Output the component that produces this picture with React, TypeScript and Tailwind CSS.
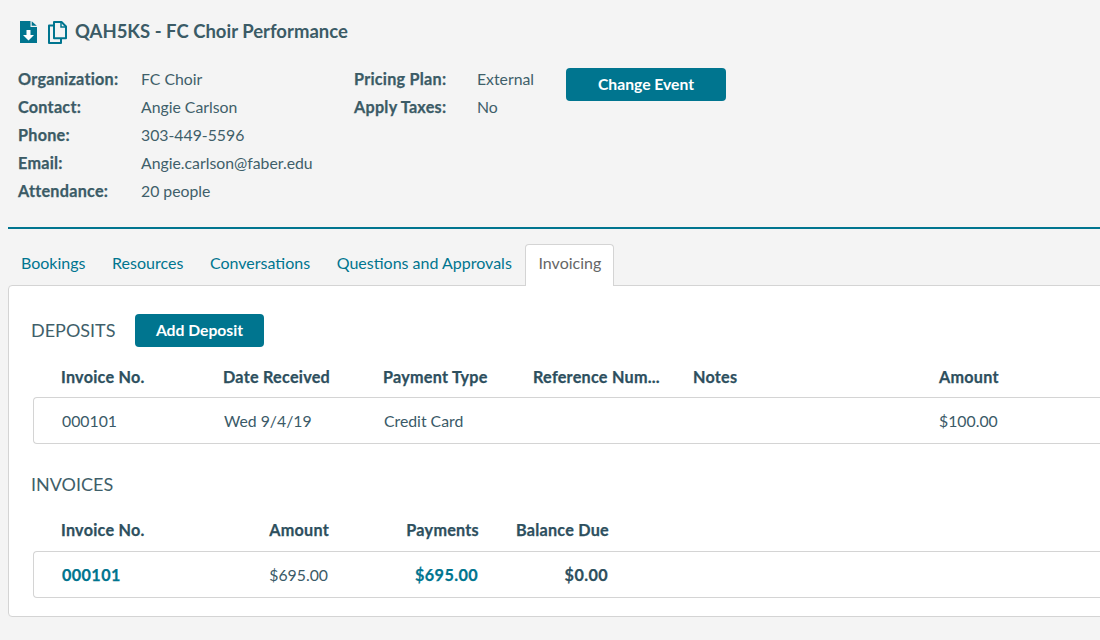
const details = [
  ['Organization:', 'FC Choir'],
  ['Contact:', 'Angie Carlson'],
  ['Phone:', '303-449-5596'],
  ['Email:', 'Angie.carlson@faber.edu'],
  ['Attendance:', '20 people'],
]

const plan = [
  ['Pricing Plan:', 'External'],
  ['Apply Taxes:', 'No'],
]

const tabs = ['Bookings', 'Resources', 'Conversations', 'Questions and Approvals']

function DetailRow({ label, value }: { label: string; value: string }) {
  return (
    <div className="flex h-[28px] items-center">
      <div className="w-[123px] text-[16.200px] font-bold tracking-[0.25px] text-[#3b5b66] [-webkit-text-stroke:0.25px]">{label}</div>
      <div className="text-[#3f5f6a]">{value}</div>
    </div>
  )
}

function Header() {
  return (
    <div className="ml-2 h-[229px] border-b-2 border-[#00758f] pl-[10px]">
      <div className="flex h-[62px] items-center pt-[2px]">
        <svg className="ml-[2px] h-[22px] w-[17px]" viewBox="0 0 17 22">
          <path d="M0 0h10.500v6h6.500v16H0z" fill="#00758f" />
          <path d="M11.700 0.200 L16.800 4.800 H11.700z" fill="#00758f" />
          <path d="M6.500 9h4v5h3.500l-5.500 5.500-5.500-5.500h3.500z" fill="#fff" />
        </svg>
        <svg className="ml-[11px] h-[23px] w-[19px]" viewBox="0 0 19 23" fill="none" stroke="#00758f" strokeWidth="2">
          <path d="M6 1h7.500l4.500 4.500v11.700H6z" strokeLinejoin="round" />
          <path d="M13 1v5h5" strokeWidth="1.500" />
          <path d="M6 4.500H1v17.500h12v-4.800" strokeLinejoin="round" />
        </svg>
        <h1 className="ml-[8px] text-[18.500px] font-bold text-[#3b5b66]">QAH5KS - FC Choir Performance</h1>
      </div>
      <div className="flex">
        <div className="w-[336px] pt-[3px]">
          {details.map(([label, value]) => (
            <DetailRow key={label} label={label} value={value} />
          ))}
        </div>
        <div className="w-[212px] pt-[3px]">
          {plan.map(([label, value]) => (
            <DetailRow key={label} label={label} value={value} />
          ))}
        </div>
        <button className="mt-[6px] h-[33px] w-[160px] rounded-[4px] bg-[#00758f] text-[15.700px] font-bold text-white">
          Change Event
        </button>
      </div>
    </div>
  )
}

function Tabs() {
  return (
    <div className="relative z-10 ml-2 mt-[15px] flex h-[42px] items-end pl-[13px] text-[16px]">
      {tabs.map((t) => (
        <div key={t} className="flex h-[39px] items-center pb-[7px] pr-[26.600px] text-[#00758f]">
          {t}
        </div>
      ))}
      <div className="-ml-[13px] flex h-[42px] w-[89px] items-center justify-center rounded-t-[4px] border border-b-0 border-[#d4d4d4] bg-white pb-[6px] text-[#666]">
        Invoicing
      </div>
    </div>
  )
}

function Deposits() {
  return (
    <>
      <div className="flex h-[33px] items-center">
        <h2 className="w-[104px] text-[18px] text-[#3f5f6a]">DEPOSITS</h2>
        <button className="h-[33px] w-[129px] rounded-[4px] bg-[#00758f] text-[15.700px] font-bold text-white">
          Add Deposit
        </button>
      </div>
      <div className="mt-[18px] flex h-[26px] pl-[30px] text-[16.200px] font-bold leading-[24px] tracking-[0.25px] text-[#2d4f5e] [-webkit-text-stroke:0.25px]">
        <div className="w-[162px]">Invoice No.</div>
        <div className="w-[160px]">Date Received</div>
        <div className="w-[150px]">Payment Type</div>
        <div className="w-[160px]">Reference Num...</div>
        <div className="w-[246px]">Notes</div>
        <div>Amount</div>
      </div>
      <div className="ml-[2px] mt-[6px] flex h-[47px] items-center rounded-l-[4px] border border-r-0 border-[#d4d4d4] pl-[28px] text-[#3a5a68]">
        <div className="w-[162px]">000101</div>
        <div className="w-[160px]">Wed 9/4/19</div>
        <div className="w-[555px]">Credit Card</div>
        <div>$100.00</div>
      </div>
    </>
  )
}

function Invoices() {
  return (
    <>
      <h2 className="mt-[28px] h-[24px] text-[18px] leading-[24px] text-[#3f5f6a]">INVOICES</h2>
      <div className="mt-[22px] flex h-[29px] pl-[30px] text-[16.200px] font-bold leading-[24px] tracking-[0.25px] text-[#2d4f5e] [-webkit-text-stroke:0.25px]">
        <div className="w-[150px]">Invoice No.</div>
        <div className="w-[118px] text-right">Amount</div>
        <div className="w-[150px] text-right">Payments</div>
        <div className="w-[130px] text-right">Balance Due</div>
      </div>
      <div className="ml-[2px] mt-[4px] flex h-[47px] items-center rounded-l-[4px] border border-r-0 border-[#d4d4d4] pl-[28px] leading-[24px] text-[#3a5a68]">
        <div className="w-[150px] pt-[1px] text-[16.200px] font-bold leading-[24px] tracking-[0.4px] text-[#00758f] [-webkit-text-stroke:0.25px]">000101</div>
        <div className="w-[116px] text-right">$695.00</div>
        <div className="w-[150px] pt-[1px] text-right text-[16.200px] font-bold leading-[24px] tracking-[0.4px] text-[#00758f] [-webkit-text-stroke:0.25px]">$695.00</div>
        <div className="w-[130px] pt-[1px] text-right text-[16.200px] font-bold leading-[24px] tracking-[0.4px] text-[#2d4f5e] [-webkit-text-stroke:0.25px]">$0.00</div>
      </div>
    </>
  )
}

export default function App() {
  return (
    <div className="h-[640px] w-[1100px] overflow-hidden bg-[#f4f4f4] font-['Lato',sans-serif] text-[15.800px]">
      <Header />
      <Tabs />
      <div className="-mt-px ml-2 h-[332px] w-[1110px] rounded-[4px] border border-[#d4d4d4] bg-white pl-[22px] pt-[28px]">
        <Deposits />
        <Invoices />
      </div>
    </div>
  )
}
